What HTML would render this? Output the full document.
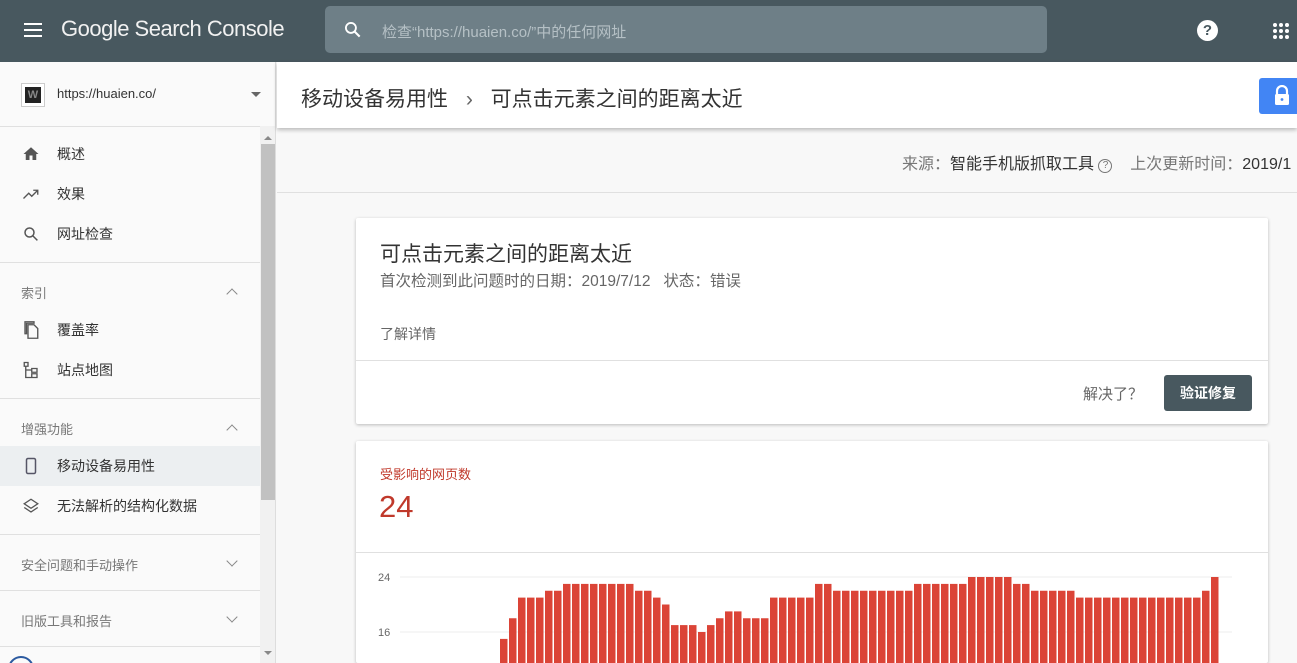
<!DOCTYPE html>
<html style="width:1297px;height:663px;overflow:hidden"><head><meta charset="utf-8"><style>
*{box-sizing:border-box;margin:0;padding:0}
body{width:1297px;height:663px;overflow:hidden;position:relative;background:#f8f8f8;font-family:"Liberation Sans","Noto Sans CJK SC",sans-serif;color:#333}
.a{position:absolute}
#hdr{left:0;top:0;width:1297px;height:62px;background:#48585f}
#side{left:0;top:62px;width:276px;height:601px;background:#fafafa;border-right:1px solid #ddd;overflow:hidden}
.it{position:absolute;left:0;width:260px;height:40px;font-size:14px;color:#333;line-height:40px;padding-left:57px}
.it svg{position:absolute;left:22px;top:11px}
.sec{position:absolute;left:21px;font-size:13px;color:#777}
.chev{position:absolute;left:228px;width:8px;height:8px;border-left:1.5px solid #888;border-top:1.5px solid #888}
.hr{position:absolute;left:0;width:260px;height:1px;background:#e0e0e0}
.card{background:#fff;box-shadow:0 1px 3px rgba(0,0,0,.25);border-radius:2px}
</style></head><body>
<div class="a" id="hdr">
 <div class="a" style="left:24px;top:23px;width:18px;height:2px;background:#fff;box-shadow:0 6px 0 #fff,0 12px 0 #fff"></div>
 <div class="a" style="left:61px;top:16px;font-size:22px;color:#f1f1f1;letter-spacing:-0.5px">Google Search Console</div>
 <div class="a" style="left:325px;top:6px;width:722px;height:47px;background:#6e7f87;border-radius:5px">
  <svg class="a" style="left:18px;top:14px" width="20" height="20" viewBox="0 0 24 24"><circle cx="9.5" cy="9.5" r="6" fill="none" stroke="#fff" stroke-width="2.2"/><path d="M14 14l6 6" stroke="#fff" stroke-width="2.5"/></svg>
  <div class="a" style="left:57px;top:15px;font-size:15px;color:#b5c0c5">检查“https://huaien.co/”中的任何网址</div>
 </div>
 <div class="a" style="left:1197px;top:20px;width:21px;height:21px;border-radius:50%;background:#fff;color:#48585f;font-weight:bold;font-size:15px;text-align:center;line-height:21px">?</div>
 <svg class="a" style="left:1272px;top:22px" width="18" height="18" viewBox="0 0 18 18" fill="#fff"><circle cx="3" cy="3" r="2"/><circle cx="9" cy="3" r="2"/><circle cx="15" cy="3" r="2"/><circle cx="3" cy="9" r="2"/><circle cx="9" cy="9" r="2"/><circle cx="15" cy="9" r="2"/><circle cx="3" cy="15" r="2"/><circle cx="9" cy="15" r="2"/><circle cx="15" cy="15" r="2"/></svg>
</div>
<div class="a" id="side">
 <div class="a" style="left:21px;top:21px;width:24px;height:24px;border:1px solid #ccc;background:#fff;padding:3px"><div style="width:16px;height:16px;background:#222;color:#888;font-size:11px;font-weight:bold;text-align:center;line-height:16px">W</div></div>
 <div class="a" style="left:57px;top:24px;font-size:13px;color:#333">https://huaien.co/</div>
 <div class="a" style="left:251px;top:30px;border:5px solid transparent;border-top-color:#666"></div>
 <div class="hr" style="top:64px;width:276px"></div>
 <div class="a" style="left:260px;top:64px;width:16px;height:537px;background:#f1f1f1"></div>
 <div class="a" style="left:261px;top:82px;width:14px;height:356px;background:#c1c1c1"></div>
 <div class="a" style="left:264px;top:70px;border:4px solid transparent;border-bottom-color:#888"></div>
 <div class="a" style="left:264px;top:589px;border:4px solid transparent;border-top-color:#888"></div>
 <div class="it" style="top:72px"><svg width="18" height="18" viewBox="0 0 24 24"><path d="M10 20v-6h4v6h5v-8h3L12 3 2 12h3v8z" fill="#555"/></svg>概述</div>
 <div class="it" style="top:112px"><svg width="18" height="18" viewBox="0 0 24 24"><path d="M2 18l7-7 4 4 8-8M15 7h6v6" fill="none" stroke="#555" stroke-width="1.8"/></svg>效果</div>
 <div class="it" style="top:152px"><svg width="18" height="18" viewBox="0 0 24 24"><circle cx="10" cy="10" r="6" fill="none" stroke="#555" stroke-width="2"/><path d="M14.5 14.5l6 6" stroke="#555" stroke-width="2"/></svg>网址检查</div>
 <div class="hr" style="top:200px"></div>
 <div class="sec" style="top:221px">索引</div><div class="chev" style="top:228px;transform:rotate(45deg)"></div>
 <div class="it" style="top:248px"><svg width="18" height="18" viewBox="0 0 24 24"><path d="M16 1H4v16h2V3h10zM8 5h8l5 5v13H8z" fill="none" stroke="#555" stroke-width="1.8"/></svg>覆盖率</div>
 <div class="it" style="top:288px"><svg width="18" height="18" viewBox="0 0 24 24"><path d="M3 2h5v5H3zM13 10h7v5h-7zM13 17h7v5h-7zM5 7v15h8M5 12h8" fill="none" stroke="#555" stroke-width="1.8"/></svg>站点地图</div>
 <div class="hr" style="top:336px"></div>
 <div class="sec" style="top:357px">增强功能</div><div class="chev" style="top:364px;transform:rotate(45deg)"></div>
 <div class="it" style="top:384px;background:#eceff1"><svg width="18" height="18" viewBox="0 0 24 24"><rect x="6" y="2" width="12" height="20" rx="2" fill="none" stroke="#556" stroke-width="2"/></svg>移动设备易用性</div>
 <div class="it" style="top:424px"><svg width="18" height="18" viewBox="0 0 24 24"><path d="M12 3l9 6-9 6-9-6zM3 14l9 6 9-6" fill="none" stroke="#555" stroke-width="1.8"/></svg>无法解析的结构化数据</div>
 <div class="hr" style="top:472px"></div>
 <div class="sec" style="top:493px">安全问题和手动操作</div><div class="chev" style="top:495px;transform:rotate(-135deg)"></div>
 <div class="hr" style="top:528px"></div>
 <div class="sec" style="top:549px">旧版工具和报告</div><div class="chev" style="top:551px;transform:rotate(-135deg)"></div>
 <div class="hr" style="top:584px"></div>
 <div class="a" style="left:8px;top:594px;width:26px;height:26px;border-radius:50%;border:2px solid #2c5aa0"></div>
</div>
<div class="a" style="left:277px;top:62px;width:1020px;height:66px;background:#fff;box-shadow:0 2px 4px rgba(0,0,0,.25)">
 <div class="a" style="left:24px;top:21px;font-size:21px;color:#333;white-space:nowrap">移动设备易用性 <span style="color:#666;margin:0 12px">›</span> 可点击元素之间的距离太近</div>
 <div class="a" style="left:982px;top:16px;width:38px;height:36px;background:#4285f4;border-radius:3px 0 0 3px">
  <svg class="a" style="left:14px;top:7px" width="18" height="22" viewBox="0 0 18 22"><path d="M4 9V6a5 5 0 0 1 10 0v3" fill="none" stroke="#fff" stroke-width="2.2"/><rect x="2" y="9" width="14" height="11" rx="1.5" fill="#fff"/><circle cx="9" cy="14.5" r="1.4" fill="#4285f4"/></svg></div>
</div>
<div class="a" style="left:277px;top:192px;width:1020px;height:1px;background:#e0e0e0"></div>
<div class="a" style="left:902px;top:150px;width:395px;overflow:hidden;font-size:16px;color:#777;white-space:nowrap">来源：<span style="color:#333">智能手机版抓取工具</span> <span style="display:inline-block;width:14px;height:14px;border:1.3px solid #777;border-radius:50%;font-size:10px;text-align:center;line-height:12px;vertical-align:1px">?</span>&nbsp;&nbsp;&nbsp; 上次更新时间：<span style="color:#333">2019/1</span></div>
<div class="a card" style="left:356px;top:218px;width:912px;height:206px">
 <div class="a" style="left:24px;top:20px;font-size:21px;color:#333">可点击元素之间的距离太近</div>
 <div class="a" style="left:24px;top:51px;font-size:15.5px;color:#666;white-space:nowrap">首次检测到此问题时的日期：2019/7/12&nbsp;&nbsp;&nbsp;状态：错误</div>
 <div class="a" style="left:24px;top:106px;font-size:14px;color:#666">了解详情</div>
 <div class="a" style="left:0;top:142px;width:912px;height:1px;background:#e0e0e0"></div>
 <div class="a" style="left:727px;top:165px;font-size:15px;color:#666">解决了？</div>
 <div class="a" style="left:808px;top:157px;width:88px;height:36px;background:#48585f;border-radius:3px;color:#fff;font-size:14px;text-align:center;line-height:36px;font-weight:bold">验证修复</div>
</div>
<div class="a card" style="left:356px;top:441px;width:912px;height:222px">
 <div class="a" style="left:24px;top:23px;font-size:13px;color:#c0392b">受影响的网页数</div>
 <div class="a" style="left:23px;top:48px;font-size:31px;color:#c0392b">24</div>
 <div class="a" style="left:0;top:111px;width:912px;height:1px;background:#e0e0e0"></div>
</div>
<svg class="a" style="left:0;top:0" width="1297" height="663">
 <line x1="400" y1="577" x2="1232" y2="577" stroke="#eee"/>
 <line x1="400" y1="632" x2="1232" y2="632" stroke="#eee"/>
 <text x="378" y="581" font-size="11" fill="#666" font-family="Liberation Sans">24</text>
 <text x="378" y="636" font-size="11" fill="#666" font-family="Liberation Sans">16</text>
 <g fill="#db4437">
 <rect x="500" y="638.9" width="7.5" height="30"/><rect x="509" y="618.25" width="7.5" height="50"/>
 <rect x="518" y="597.6" width="7.5" height="70"/><rect x="527" y="597.6" width="7.5" height="70"/><rect x="536" y="597.6" width="7.5" height="70"/>
 <rect x="545" y="590.75" width="7.5" height="80"/><rect x="554" y="590.75" width="7.5" height="80"/>
 <rect x="563" y="583.9" width="7.5" height="80"/><rect x="572" y="583.9" width="7.5" height="80"/><rect x="581" y="583.9" width="7.5" height="80"/><rect x="590" y="583.9" width="7.5" height="80"/><rect x="599" y="583.9" width="7.5" height="80"/><rect x="608" y="583.9" width="7.5" height="80"/><rect x="617" y="583.9" width="7.5" height="80"/><rect x="626" y="583.9" width="7.5" height="80"/>
 <rect x="635" y="590.75" width="7.5" height="80"/><rect x="644" y="590.75" width="7.5" height="80"/>
 <rect x="653" y="597.6" width="7.5" height="80"/><rect x="662" y="604.5" width="7.5" height="80"/>
 <rect x="671" y="625.1" width="7.5" height="80"/><rect x="680" y="625.1" width="7.5" height="80"/><rect x="689" y="625.1" width="7.5" height="80"/>
 <rect x="698" y="632" width="7.5" height="80"/><rect x="707" y="625.1" width="7.5" height="80"/><rect x="716" y="618.25" width="7.5" height="80"/>
 <rect x="725" y="611.4" width="7.5" height="80"/><rect x="734" y="611.4" width="7.5" height="80"/>
 <rect x="743" y="618.25" width="7.5" height="80"/><rect x="752" y="618.25" width="7.5" height="80"/><rect x="761" y="618.25" width="7.5" height="80"/>
 <rect x="770" y="597.6" width="7.5" height="80"/><rect x="779" y="597.6" width="7.5" height="80"/><rect x="788" y="597.6" width="7.5" height="80"/><rect x="797" y="597.6" width="7.5" height="80"/><rect x="806" y="597.6" width="7.5" height="80"/>
 <rect x="815" y="583.9" width="7.5" height="80"/><rect x="824" y="583.9" width="7.5" height="80"/>
 <rect x="833" y="590.75" width="7.5" height="80"/><rect x="842" y="590.75" width="7.5" height="80"/><rect x="851" y="590.75" width="7.5" height="80"/><rect x="860" y="590.75" width="7.5" height="80"/><rect x="869" y="590.75" width="7.5" height="80"/><rect x="878" y="590.75" width="7.5" height="80"/><rect x="887" y="590.75" width="7.5" height="80"/><rect x="896" y="590.75" width="7.5" height="80"/><rect x="905" y="590.75" width="7.5" height="80"/>
 <rect x="914" y="583.9" width="7.5" height="80"/><rect x="923" y="583.9" width="7.5" height="80"/><rect x="932" y="583.9" width="7.5" height="80"/><rect x="941" y="583.9" width="7.5" height="80"/><rect x="950" y="583.9" width="7.5" height="80"/><rect x="959" y="583.9" width="7.5" height="80"/>
 <rect x="968" y="577" width="7.5" height="90"/><rect x="977" y="577" width="7.5" height="90"/><rect x="986" y="577" width="7.5" height="90"/><rect x="995" y="577" width="7.5" height="90"/><rect x="1004" y="577" width="7.5" height="90"/>
 <rect x="1013" y="583.9" width="7.5" height="80"/><rect x="1022" y="583.9" width="7.5" height="80"/>
 <rect x="1031" y="590.75" width="7.5" height="80"/><rect x="1040" y="590.75" width="7.5" height="80"/><rect x="1049" y="590.75" width="7.5" height="80"/><rect x="1058" y="590.75" width="7.5" height="80"/><rect x="1067" y="590.75" width="7.5" height="80"/>
 <rect x="1076" y="597.6" width="7.5" height="80"/><rect x="1085" y="597.6" width="7.5" height="80"/><rect x="1094" y="597.6" width="7.5" height="80"/><rect x="1103" y="597.6" width="7.5" height="80"/><rect x="1112" y="597.6" width="7.5" height="80"/><rect x="1121" y="597.6" width="7.5" height="80"/><rect x="1130" y="597.6" width="7.5" height="80"/><rect x="1139" y="597.6" width="7.5" height="80"/><rect x="1148" y="597.6" width="7.5" height="80"/><rect x="1157" y="597.6" width="7.5" height="80"/><rect x="1166" y="597.6" width="7.5" height="80"/><rect x="1175" y="597.6" width="7.5" height="80"/><rect x="1184" y="597.6" width="7.5" height="80"/><rect x="1193" y="597.6" width="7.5" height="80"/>
 <rect x="1202" y="590.75" width="7.5" height="80"/><rect x="1211" y="577" width="7.5" height="90"/>
 </g>
</svg>
</body></html>
